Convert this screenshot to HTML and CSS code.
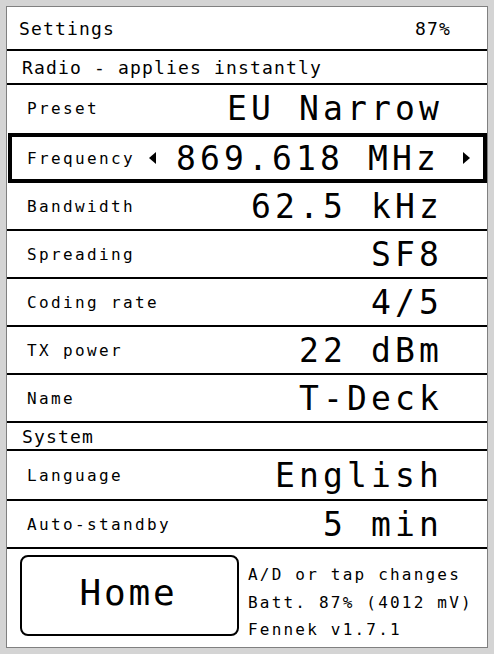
FILE: index.html
```html
<!DOCTYPE html>
<html lang="en">
<head>
    <meta charset="UTF-8">
    <meta name="viewport" content="width=device-width, initial-scale=1.0">
    <title>Settings</title>
    <link rel="stylesheet" href="styles.css">
</head>
<body>
    <div class="screen">
        <div class="header">
            <span>Settings</span>
            <span>87%</span>
        </div>

        <div class="section radio">Radio - applies instantly</div>

        <div class="row">
            <span class="label">Preset</span>
            <span class="value">EU Narrow</span>
        </div>

        <div class="row selected">
            <span class="label">Frequency</span>
            <svg class="arrow left" width="7" height="12" viewBox="0 0 7 12"><polygon points="7,0 7,12 0,6"/></svg>
            <span class="value">869.618 MHz</span>
            <svg class="arrow right" width="7" height="12" viewBox="0 0 7 12"><polygon points="0,0 0,12 7,6"/></svg>
        </div>

        <div class="row">
            <span class="label">Bandwidth</span>
            <span class="value">62.5 kHz</span>
        </div>

        <div class="row">
            <span class="label">Spreading</span>
            <span class="value">SF8</span>
        </div>

        <div class="row">
            <span class="label">Coding rate</span>
            <span class="value">4/5</span>
        </div>

        <div class="row">
            <span class="label">TX power</span>
            <span class="value">22 dBm</span>
        </div>

        <div class="row">
            <span class="label">Name</span>
            <span class="value">T-Deck</span>
        </div>

        <div class="section system">System</div>

        <div class="row tall">
            <span class="label">Language</span>
            <span class="value">English</span>
        </div>

        <div class="row">
            <span class="label">Auto-standby</span>
            <span class="value">5 min</span>
        </div>

        <div class="footer">
            <div class="home">Home</div>
            <div class="info">
                <div>A/D or tap changes</div>
                <div>Batt. 87% (4012 mV)</div>
                <div>Fennek v1.7.1</div>
            </div>
        </div>
    </div>
</body>
</html>
```

FILE: styles.css
```css
body {
    margin: 0;
    background: #d4d4d4;
    font-family: "DejaVu Sans Mono", monospace;
    color: #000;
}
.screen {
    margin: 6px;
    height: 640px;
    border: 1px solid #808080;
    background: #fff;
    display: flex;
    flex-direction: column;
}
.header {
    height: 44px;
    box-sizing: border-box;
    border-bottom: 2px solid #000;
    display: flex;
    justify-content: space-between;
    align-items: center;
    padding: 0 36px 0 12px;
    font-size: 18px;
    letter-spacing: 1.16px;
}
.section {
    box-sizing: border-box;
    border-bottom: 2px solid #000;
    display: flex;
    align-items: center;
    padding-left: 15px;
    font-size: 18px;
    letter-spacing: 1.16px;
}
.section.radio {
    height: 34px;
}
.section.system {
    height: 28px;
}
.row {
    height: 48px;
    flex-shrink: 0;
    box-sizing: border-box;
    border-bottom: 2px solid #000;
    display: flex;
    align-items: center;
    padding: 0 44px 0 20px;
}
.row.tall {
    height: 50px;
}
.row:has(+ .selected) {
    border-bottom-color: transparent;
}
.row.selected {
    height: 50px;
    margin-left: 1px;
    border: 4px solid #000;
    padding: 0 13px 0 15px;
}
.label {
    flex: 1;
    font-size: 16px;
    letter-spacing: 2.37px;
    white-space: nowrap;
}
.value {
    font-size: 33px;
    letter-spacing: 4.13px;
    white-space: nowrap;
}
.arrow {
    flex-shrink: 0;
}
.arrow.left {
    margin-right: 20px;
}
.arrow.right {
    margin-left: 23px;
}
.footer {
    flex: 1;
    display: flex;
    align-items: flex-start;
    padding: 6px 0 0 13px;
}
.home {
    width: 219px;
    height: 81px;
    box-sizing: border-box;
    border: 2px solid #000;
    border-radius: 8px;
    display: flex;
    align-items: center;
    justify-content: center;
    padding: 0 2px 6px 0;
    font-size: 36px;
    letter-spacing: 2.8px;
}
.info {
    margin-left: 9px;
    padding-top: 6px;
    font-size: 16px;
    letter-spacing: 2.2px;
    line-height: 27.5px;
    white-space: nowrap;
}
```
